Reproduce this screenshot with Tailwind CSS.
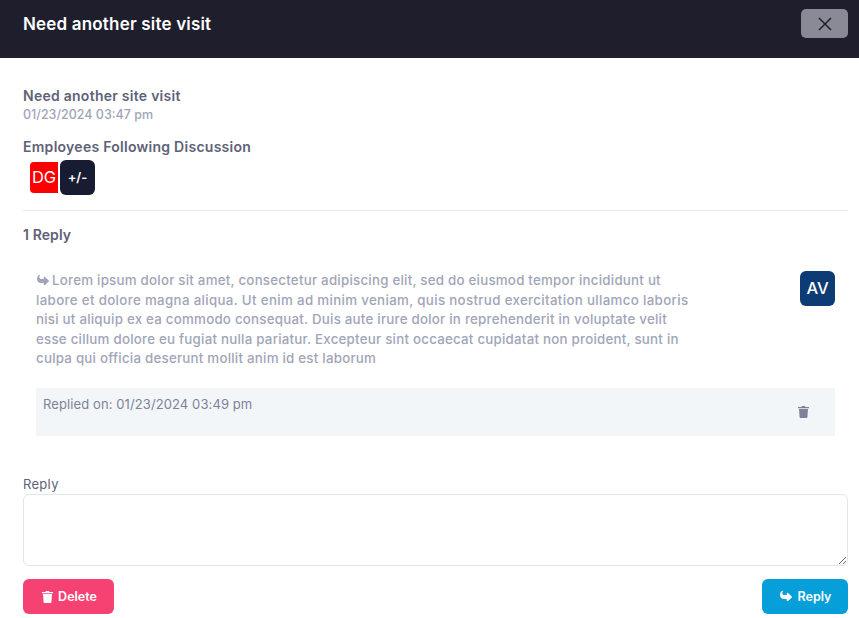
<!DOCTYPE html>
<html><head><meta charset="utf-8"><script src="https://cdn.jsdelivr.net/npm/@tailwindcss/browser@4"></script></head>
<body class="bg-white font-['Inter',sans-serif] overflow-hidden">
<div class="w-[859px] h-[618px] overflow-hidden flex flex-col">
  <header class="h-[58px] shrink-0 bg-[#1e1e2d] flex items-start justify-between pl-[23px] pr-[11px]">
    <h1 class="mt-[12px] text-[17px] leading-[24px] font-semibold tracking-[0.18px] text-white">Need another site visit</h1>
    <button class="mt-[9px] w-[47px] h-[29px] rounded-[5px] bg-[#8a8a96] flex items-center justify-center">
      <svg width="14" height="14" viewBox="0 0 14 14" fill="none" stroke="#1e1e2d" stroke-width="1.5"><path d="M1 1l12 12M13 1L1 13"/></svg>
    </button>
  </header>
  <main class="flex-1 px-[23px] pr-[11px] flex flex-col">
    <p class="mt-[28px] text-[14px] leading-[19px] font-semibold tracking-[0.26px] text-[#5e6278]">Need another site visit</p>
    <p class="text-[12.5px] leading-[19px] font-medium text-[#a1a5b7]">01/23/2024 03:47 pm</p>
    <p class="mt-[12px] text-[14px] leading-[21px] font-semibold tracking-[0.27px] text-[#5e6278]">Employees Following Discussion</p>
    <div class="mt-[3px] pl-[7px] flex items-center h-[35px]">
      <span class="w-[28px] h-[31px] bg-[#ff0000] text-white text-[16.5px] rounded-l-[4px] flex items-center justify-center whitespace-nowrap">DG</span>
      <span class="ml-[2px] relative w-[35px] h-[35px] bg-[#181c32] text-white text-[13px] font-semibold rounded-[6px] flex items-center justify-center">+/-</span>
    </div>
    <hr class="mt-[15px] border-t border-[#e9eaf0]">
    <p class="mt-[14px] text-[14px] leading-[19px] font-semibold tracking-[0.1px] text-[#5e6278]">1 Reply</p>
    <section class="mt-[27px] pl-[13px] pr-[13px] flex justify-between items-start">
      <p class="whitespace-nowrap text-[13.3px] leading-[19.5px] font-medium tracking-[0.24px] text-[#a1a5b7]"><svg class="inline w-[14px] h-[12px] mr-[2px] align-[-1px]" viewBox="0 0 512 512" fill="#a1a5b7"><path transform="matrix(1 0 0 -1 0 512)" d="M307 34c-11 5-19 16-19 29v64H176C78 127 0 206 0 303c0 113 81 164 100 174 3 1 5 2 8 2 11 0 19-9 19-19 0-8-4-14-9-19-10-9-22-25-22-54 0-50 41-91 91-91h101v64c0 13 8 24 19 29s25 3 35-6l160-144c7-6 10-15 10-24s-4-18-10-24L342 48c-9-8-23-10-35-6z"/></svg>Lorem ipsum dolor sit amet, consectetur adipiscing elit, sed do eiusmod tempor incididunt ut<br><span class="tracking-[0.34px]">labore et dolore magna aliqua. Ut enim ad minim veniam, quis nostrud exercitation ullamco laboris</span><br>nisi ut aliquip ex ea commodo consequat. Duis aute irure dolor in reprehenderit in voluptate velit<br>esse cillum dolore eu fugiat nulla pariatur. Excepteur sint occaecat cupidatat non proident, sunt in<br>culpa qui officia deserunt mollit anim id est laborum</p>
      <span class="w-[35px] h-[35px] bg-[#0d3b73] text-white text-[16.5px] font-medium rounded-[6px] flex items-center justify-center">AV</span>
    </section>
    <div class="mt-[19px] ml-[13px] mr-[13px] h-[48px] bg-[#f3f6f9] flex justify-between items-start pl-[7px] pr-[26px]">
      <span class="mt-[7px] text-[13px] leading-[19px] tracking-[0.1px] text-[#7e8299]">Replied on: 01/23/2024 03:49 pm</span>
      <svg class="mt-[17px] w-[11px] h-[13px]" viewBox="0 0 11 13" fill="#7e8299"><path d="M0 2h3.5l.5-1h3l.5 1H11v1.2H0zM1 4h9l-.6 8.2c0 .5-.4.8-.9.8h-6c-.5 0-.9-.3-.9-.8z"/></svg>
    </div>
    <label class="mt-[39px] text-[13px] leading-[19px] tracking-[0.3px] text-[#5e6278]">Reply</label>
    <textarea class="h-[72px] w-full border border-[#e4e6ef] rounded-[6px] bg-white block"></textarea>
    <div class="mt-[13px] flex justify-between">
      <button class="w-[91px] h-[35px] rounded-[6px] bg-[#f64272] text-white text-[12.5px] font-semibold flex items-center justify-center gap-[5px] pl-[2px]">
        <svg class="w-[11px] h-[13px]" viewBox="0 0 11 13" fill="#fff"><path d="M0 2h3.5l.5-1h3l.5 1H11v1.2H0zM1 4h9l-.6 8.2c0 .5-.4.8-.9.8h-6c-.5 0-.9-.3-.9-.8z"/></svg><span class="pt-[2px]">Delete</span></button>
      <button class="w-[86px] h-[35px] rounded-[6px] bg-[#069fd9] text-white text-[12.5px] font-semibold flex items-center justify-center gap-[5px]">
        <svg class="w-[14px] h-[12px]" viewBox="0 0 512 512" fill="#fff"><path transform="matrix(1 0 0 -1 0 512)" d="M307 34c-11 5-19 16-19 29v64H176C78 127 0 206 0 303c0 113 81 164 100 174 3 1 5 2 8 2 11 0 19-9 19-19 0-8-4-14-9-19-10-9-22-25-22-54 0-50 41-91 91-91h101v64c0 13 8 24 19 29s25 3 35-6l160-144c7-6 10-15 10-24s-4-18-10-24L342 48c-9-8-23-10-35-6z"/></svg><span class="pt-[2px]">Reply</span></button>
    </div>
  </main>
</div>
</body></html>
